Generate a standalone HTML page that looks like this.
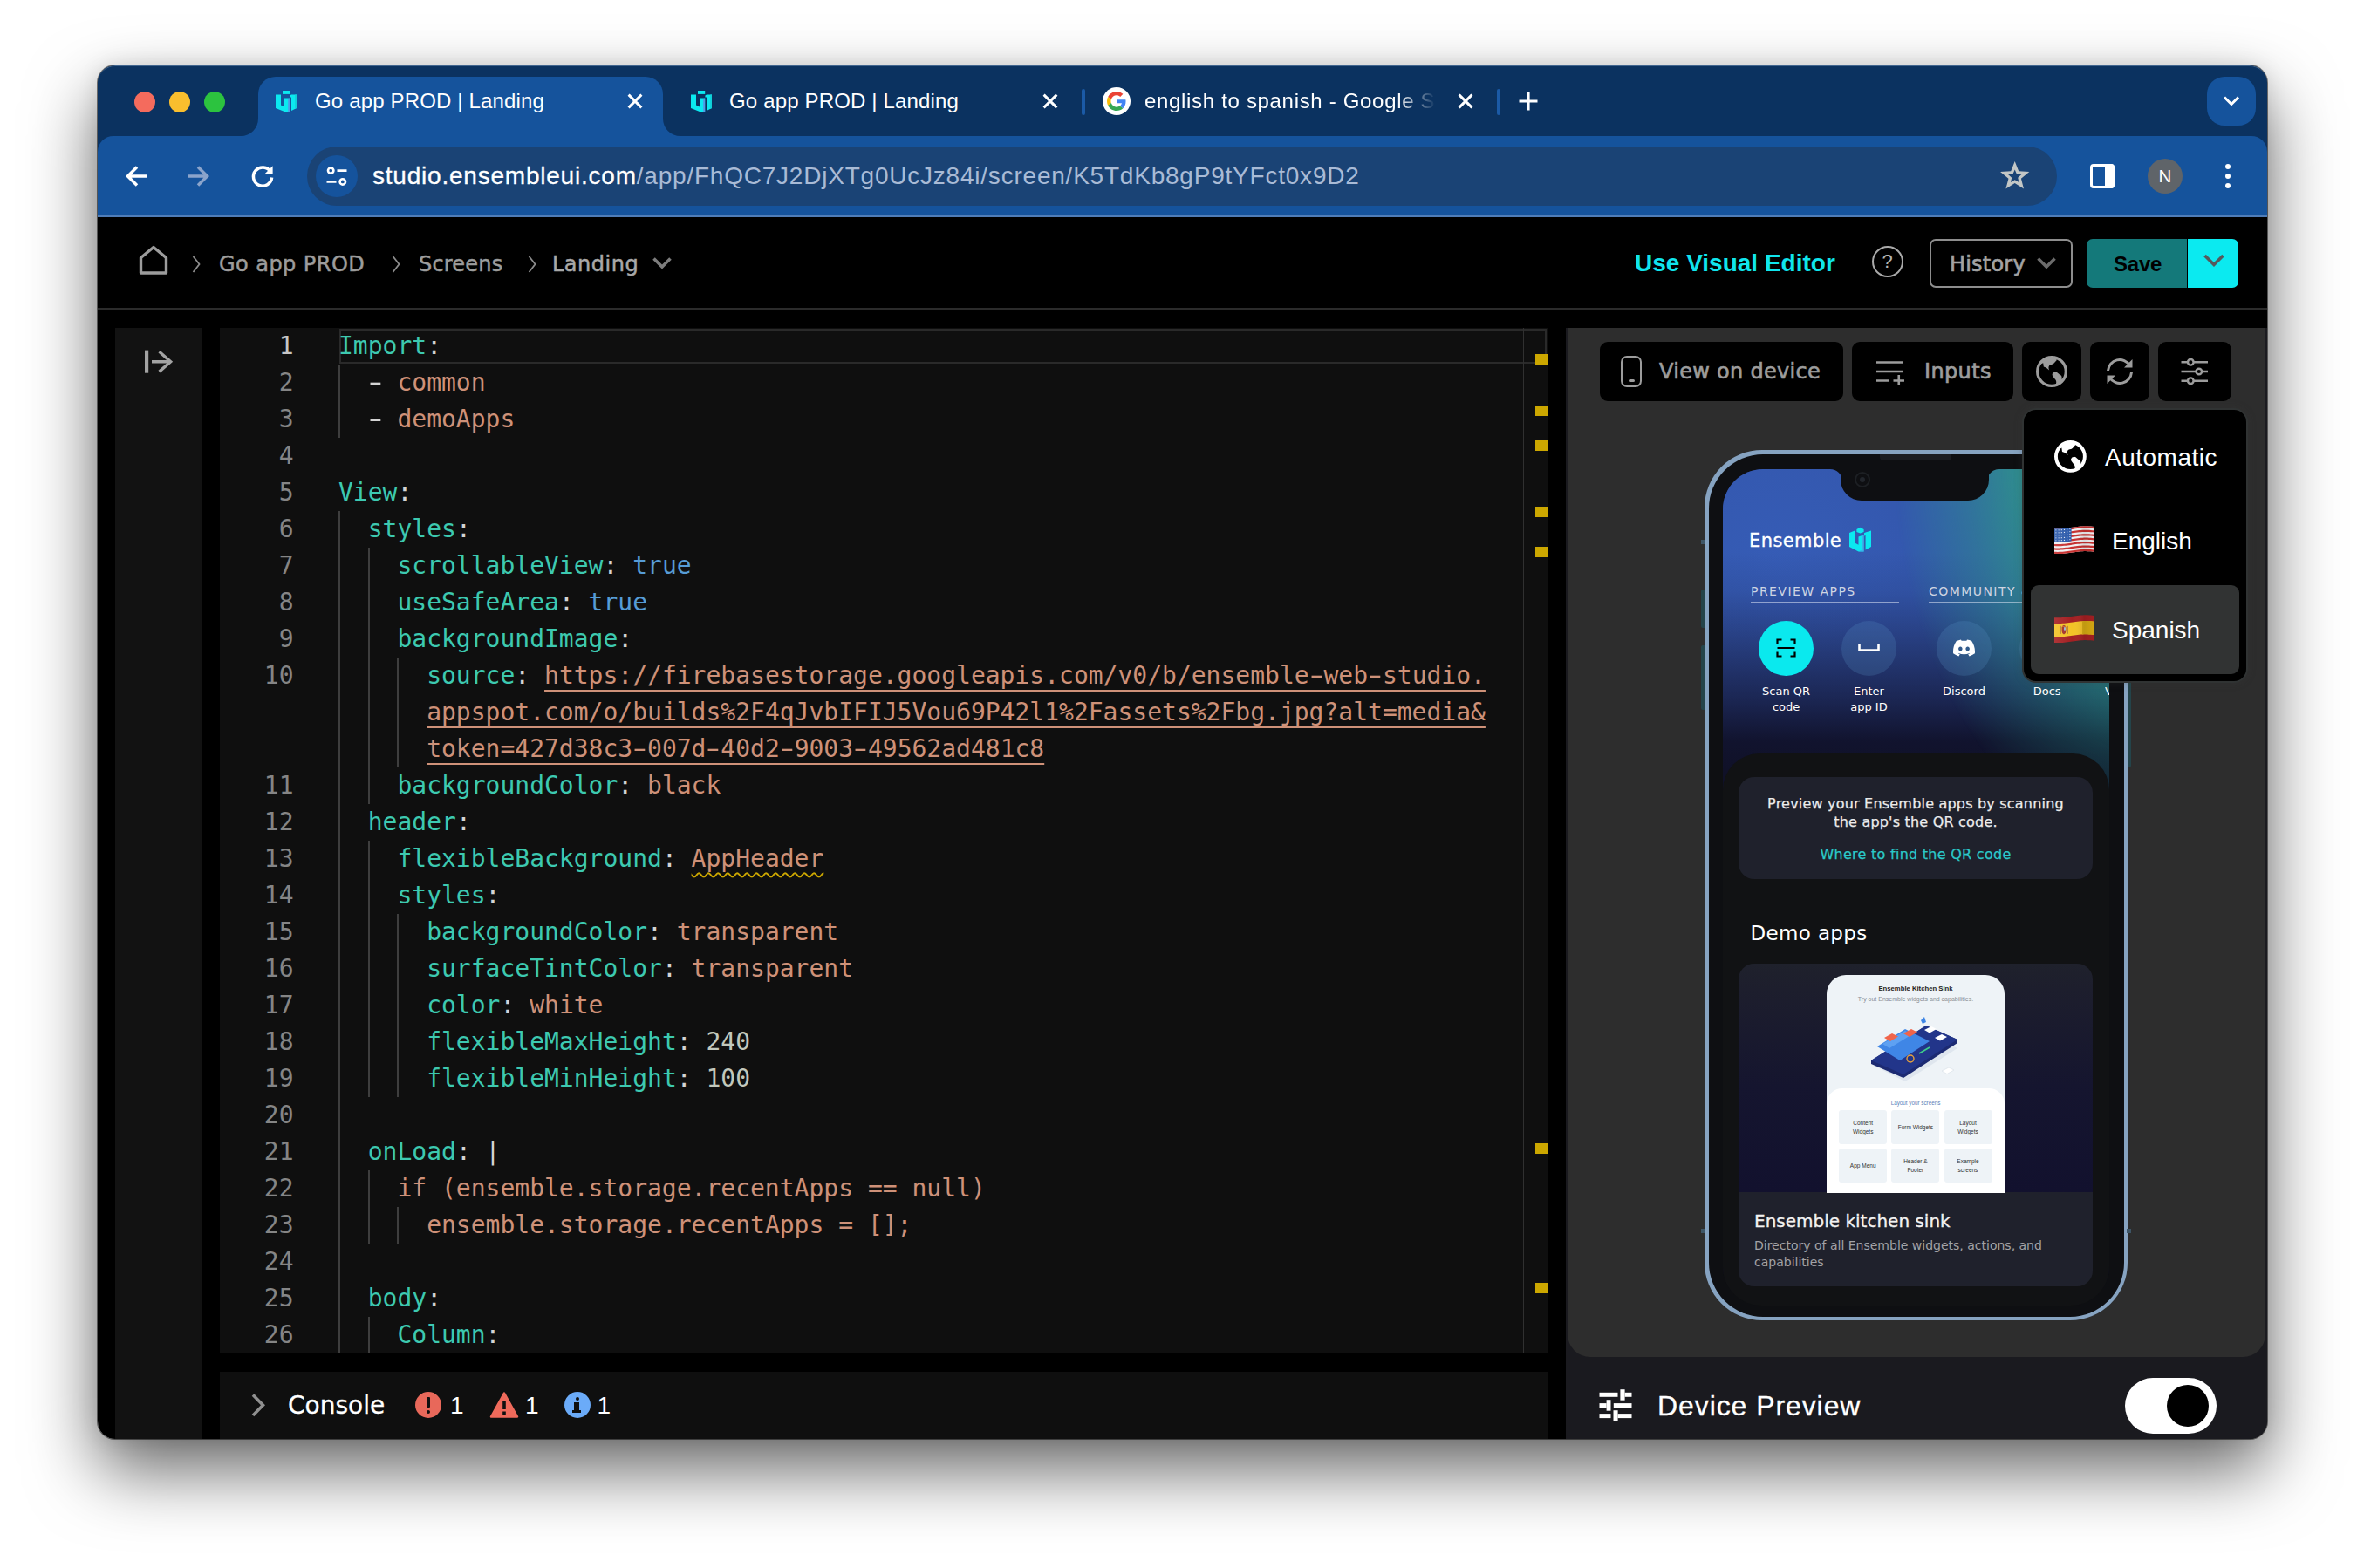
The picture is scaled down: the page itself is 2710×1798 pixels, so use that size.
<!DOCTYPE html>
<html lang="en">
<head>
<meta charset="utf-8">
<title>Go app PROD | Landing</title>
<style>
html,body{margin:0;padding:0;background:#fff;}
body{width:2710px;height:1798px;position:relative;overflow:hidden;font-family:"Liberation Sans",sans-serif;}
.abs,.abs *{box-sizing:border-box;}
.a{position:absolute;}
#shadow{position:absolute;left:112px;top:75px;width:2487px;height:1575px;border-radius:20px;
  box-shadow:0 0 0 1px rgba(0,0,0,.5),0 36px 80px rgba(0,0,0,.60),0 0 24px rgba(0,0,0,.10);}
#win{position:absolute;left:112px;top:75px;width:2487px;height:1575px;border-radius:20px;overflow:hidden;background:#000;}
#pg{position:absolute;left:-112px;top:-75px;width:2710px;height:1798px;}
#pg div,#pg span,#pg svg{position:absolute;box-sizing:border-box;}
.t{white-space:pre;line-height:1;}
/* chrome */
#tabstrip{left:112px;top:75px;width:2487px;height:120px;background:#0b3260;}
#toolbar{left:112px;top:156px;width:2487px;height:93px;background:#15539c;border-radius:18px 18px 0 0;}
#tbline{left:112px;top:247px;width:2487px;height:2px;background:#4f7db8;}
.tl{width:24px;height:24px;border-radius:50%;top:105px;}
#tab1{left:296px;top:88px;width:464px;height:70px;background:#15539c;border-radius:20px 20px 0 0;}
.tabtxt{font-size:24px;color:#fff;top:104px;letter-spacing:.16px;}
.sep{width:4px;height:30px;top:102px;background:#1b5aa6;border-radius:2px;}
#omni{left:352px;top:168px;width:2006px;height:68px;border-radius:34px;background:#1a4375;}
#url{left:427px;top:188px;font-size:28px;letter-spacing:.78px;color:#a9bbd6;}
#url b{font-weight:400;color:#fff;-webkit-text-stroke:.3px #fff;}
/* app header */
#hdr{left:112px;top:249px;width:2487px;height:106px;background:#000;border-bottom:2px solid #2b2b2b;}
.mont{font-family:"DejaVu Sans","Liberation Sans",sans-serif;}
.crumb{font-size:24px;color:#9c9c9c;top:290.5px;-webkit-text-stroke:.5px #9c9c9c;}

/* main */
#side{left:132px;top:376px;width:100px;height:1280px;background:#121212;}
#ed{left:252px;top:376px;width:1522px;height:1176px;background:#0f0f0f;overflow:hidden;}
#con{left:252px;top:1573px;width:1522px;height:80px;background:#0f0f0f;}
.mono{font-family:"DejaVu Sans Mono","Liberation Mono",monospace;font-size:28px;}
#pg .ln{left:0;width:1522px;height:42px;}
#pg .ln .n{right:1437.5px;top:0;line-height:42px;color:#858585;white-space:pre;}
#pg .ln .c{left:136px;top:0;line-height:42px;color:#d4d4d4;white-space:pre;}
#pg .ln i{position:absolute;top:0;width:2px;height:42px;background:#3e3e3e;}
.k{color:#3dc9b0;} .s{color:#ce9178;} .b{color:#569cd6;} .m{color:#c2c8bc;}
#pg .c span{position:static;}
.u{text-decoration:underline;text-decoration-thickness:2px;text-underline-offset:7px;}
#pg .ym{left:1508px;width:14px;height:12px;background:#cca700;}
#prev{left:1797px;top:376px;width:799.5px;height:1180px;background:#2d2d2d;border-radius:0 0 26px 26px;}
#dbar{left:1795px;top:376px;width:810px;height:1284px;background:#1a1a1f;}
.pbtn{top:392px;height:68px;background:#000;border-radius:9px;}

.ph{font-family:"DejaVu Sans","Liberation Sans",sans-serif;white-space:pre;line-height:1;}
#screen{left:1975px;top:538px;width:443px;height:958px;border-radius:46px 46px 44px 44px;overflow:hidden;background:#101128;}
#hero{left:0;top:0;width:443px;height:380px;background:
  linear-gradient(180deg, rgba(17,18,46,0) 0, rgba(17,18,46,0) 95px, rgba(17,18,48,.1) 140px, rgba(17,18,48,.3) 182px, rgba(17,18,46,.7) 262px, rgba(16,17,42,.97) 312px, #101128 345px),
  radial-gradient(ellipse 250px 230px at 14% 28%, rgba(54,93,184,.8) 0%, rgba(52,88,176,.4) 60%, rgba(40,70,160,0) 100%),
  #3458ae;}
#teal{left:0;top:0;width:443px;height:380px;background:linear-gradient(180deg,#2f8f8c 0,#2e8c8a 150px,#297f7c 230px,#21706c 285px,#1c5f5e 330px,#1a5858 380px);
  -webkit-mask-image:radial-gradient(ellipse 262px 380px at 520px -20px, #000 0%, #000 66%, rgba(0,0,0,.5) 92%, transparent 124%);
  mask-image:radial-gradient(ellipse 262px 380px at 520px -20px, #000 0%, #000 66%, rgba(0,0,0,.5) 92%, transparent 124%);}
.circ{width:63px;height:63px;border-radius:50%;top:711.5px;}
.lbl{font-size:13px;color:#fff;text-align:center;width:90px;}
#pg .c .hy{display:inline-block;transform:scaleX(1.65);text-decoration:inherit;text-decoration-thickness:2px;text-underline-offset:7px;}
</style>
</head>
<body>
<div id="shadow"></div>
<div id="win"><div id="pg">

<!-- ===== TAB STRIP ===== -->
<div id="tabstrip"></div>
<div style="left:112px;top:75px;width:2487px;height:40px;border-radius:20px 20px 0 0;border-top:1.5px solid rgba(150,180,215,.4)"></div>
<div class="tl" style="left:154px;background:#f46b5d"></div>
<div class="tl" style="left:194px;background:#f9be2e"></div>
<div class="tl" style="left:234px;background:#2cc33f"></div>
<div id="toolbar"></div>
<div id="tab1"></div>
<svg style="left:276px;top:136px" width="20" height="20"><path d="M20 0 V20 H0 A20 20 0 0 0 20 0Z" fill="#15539c"/></svg>
<svg style="left:760px;top:136px" width="20" height="20"><path d="M0 0 V20 H20 A20 20 0 0 1 0 0Z" fill="#15539c"/></svg>

<svg style="left:315px;top:103px" width="26" height="26" viewBox="0 0 26 26">
<path d="M1 5.6 L7 5.6 L7 17.5 L11 19.5 L11 9.4 L17.2 9.4 L17.2 25 L11 25 L1 21Z" fill="#0be9f0"/>
<path d="M15.2 10.5 L17.2 9.4 L17.2 25 L15.2 25Z" fill="#4f9be8"/>
<rect x="9" y="1" width="8.2" height="3.9" fill="#0be9f0"/>
<path d="M19 5.6 L25 5.6 L25 21 L19 24 L19 8.6 L17.4 8.6 L17.4 6.4Z" fill="#0be9f0"/>
<path d="M23.2 5.6 L25 5.6 L25 21 L23.2 22Z" fill="#10cfd8"/>
</svg>
<span class="t tabtxt" style="left:361px">Go app PROD | Landing</span>
<svg style="left:718px;top:106px" width="20" height="20" viewBox="0 0 20 20"><path d="M2.6 2.6 L17.4 17.4 M17.4 2.6 L2.6 17.4" stroke="#fff" stroke-width="3" fill="none"/></svg>
<svg style="left:791px;top:103px" width="26" height="26" viewBox="0 0 26 26">
<path d="M1 5.6 L7 5.6 L7 17.5 L11 19.5 L11 9.4 L17.2 9.4 L17.2 25 L11 25 L1 21Z" fill="#0be9f0"/>
<path d="M15.2 10.5 L17.2 9.4 L17.2 25 L15.2 25Z" fill="#4f9be8"/>
<rect x="9" y="1" width="8.2" height="3.9" fill="#0be9f0"/>
<path d="M19 5.6 L25 5.6 L25 21 L19 24 L19 8.6 L17.4 8.6 L17.4 6.4Z" fill="#0be9f0"/>
<path d="M23.2 5.6 L25 5.6 L25 21 L23.2 22Z" fill="#10cfd8"/>
</svg>
<span class="t tabtxt" style="left:836px">Go app PROD | Landing</span>
<svg style="left:1194px;top:106px" width="20" height="20" viewBox="0 0 20 20"><path d="M2.6 2.6 L17.4 17.4 M17.4 2.6 L2.6 17.4" stroke="#fff" stroke-width="3" fill="none"/></svg>
<div class="sep" style="left:1240px"></div>
<div style="left:1264px;top:100px;width:32px;height:32px;border-radius:50%;background:#fff"></div>
<svg style="left:1269px;top:105px" width="22" height="22" viewBox="0 0 48 48">
<path fill="#EA4335" d="M24 9.5c3.54 0 6.71 1.22 9.21 3.6l6.85-6.85C35.9 2.38 30.47 0 24 0 14.62 0 6.51 5.38 2.56 13.22l7.98 6.19C12.43 13.72 17.74 9.5 24 9.5z"/>
<path fill="#4285F4" d="M46.98 24.55c0-1.57-.15-3.09-.38-4.55H24v9.02h12.94c-.58 2.96-2.26 5.48-4.78 7.18l7.73 6c4.51-4.18 7.09-10.36 7.09-17.65z"/>
<path fill="#FBBC05" d="M10.53 28.59c-.48-1.45-.76-2.99-.76-4.59s.27-3.14.76-4.59l-7.98-6.19C.92 16.46 0 20.12 0 24c0 3.88.92 7.54 2.56 10.78l7.97-6.19z"/>
<path fill="#34A853" d="M24 48c6.48 0 11.93-2.13 15.89-5.81l-7.73-6c-2.15 1.45-4.92 2.3-8.16 2.3-6.26 0-11.57-4.22-13.47-9.91l-7.98 6.19C6.51 42.62 14.62 48 24 48z"/>
</svg>
<span class="t tabtxt" style="left:1312px;letter-spacing:.68px;width:336px;overflow:hidden;height:32px;-webkit-mask-image:linear-gradient(90deg,#000 0,#000 290px,transparent 334px);mask-image:linear-gradient(90deg,#000 0,#000 290px,transparent 334px)">english to spanish - Google Search</span>
<svg style="left:1670px;top:106px" width="20" height="20" viewBox="0 0 20 20"><path d="M2.6 2.6 L17.4 17.4 M17.4 2.6 L2.6 17.4" stroke="#fff" stroke-width="3" fill="none"/></svg>
<div class="sep" style="left:1716px"></div>
<svg style="left:1740px;top:104px" width="24" height="24" viewBox="0 0 24 24"><path d="M12 1.5 V22.5 M1.5 12 H22.5" stroke="#fff" stroke-width="3.2" fill="none"/></svg>
<div style="left:2530px;top:88px;width:56px;height:56px;border-radius:20px;background:#15539c"></div>
<svg style="left:2546px;top:106px" width="24" height="20" viewBox="0 0 24 20"><path d="M4 5.5 L12 13.5 L20 5.5" stroke="#fff" stroke-width="3" fill="none"/></svg>


<svg style="left:142px;top:188px" width="30" height="28" viewBox="0 0 30 28"><path d="M27 14 H5 M15 3.5 L4.5 14 L15 24.5" stroke="#fff" stroke-width="3.5" fill="none"/></svg>
<svg style="left:212px;top:188px" width="30" height="28" viewBox="0 0 30 28"><path d="M3 14 H25 M15 3.5 L25.5 14 L15 24.5" stroke="#8ba4cb" stroke-width="3.5" fill="none"/></svg>
<svg style="left:286px;top:187px" width="30" height="30" viewBox="0 0 30 30"><path d="M24.2 10.2 A10.6 10.6 0 1 0 25.6 16.5" stroke="#fff" stroke-width="3.5" fill="none"/><path d="M26.6 3.2 V12.2 H17.6Z" fill="#fff"/></svg>
<div id="omni"></div>
<div style="left:362px;top:178px;width:48px;height:48px;border-radius:50%;background:#15539c"></div>
<svg style="left:373px;top:189px" width="26" height="26" viewBox="0 0 26 26"><g stroke="#fff" stroke-width="2.6" fill="none"><circle cx="6.2" cy="6.6" r="3.2"/><path d="M13.5 6.6 H24.5"/><circle cx="19.8" cy="19.4" r="3.2"/><path d="M1.5 19.4 H12.5"/></g></svg>
<span id="url" class="t"><b>studio.ensembleui.com</b>/app/FhQC7J2DjXTg0UcJz84i/screen/K5TdKb8gP9tYFct0x9D2</span>
<svg style="left:2292px;top:184px" width="36" height="36" viewBox="0 0 36 36"><path d="M17.70 0.90 L22.17 12.25 L34.34 12.99 L24.93 20.75 L27.99 32.56 L17.70 26.00 L7.41 32.56 L10.47 20.75 L1.06 12.99 L13.23 12.25Z M17.70 10.50 L19.87 15.51 L25.31 16.03 L21.22 19.64 L22.40 24.97 L17.70 22.20 L13.00 24.97 L14.18 19.64 L10.09 16.03 L15.53 15.51Z" fill="#c3c7c6" fill-rule="evenodd"/></svg>
<div style="left:2396px;top:187.5px;width:28px;height:28.6px;border:3px solid #fff;border-radius:4px"></div>
<div style="left:2413px;top:187.5px;width:11px;height:28.6px;background:#fff;border-radius:0 4px 4px 0"></div>
<div style="left:2462px;top:182px;width:40px;height:40px;border-radius:50%;background:#5f6469"></div>
<span class="t" style="left:2474.6px;top:192.2px;font-size:20.5px;color:#fff">N</span>
<div style="left:2550.8px;top:187.5px;width:6.4px;height:6.4px;border-radius:50%;background:#fff"></div>
<div style="left:2550.8px;top:198.9px;width:6.4px;height:6.4px;border-radius:50%;background:#fff"></div>
<div style="left:2550.8px;top:209.9px;width:6.4px;height:6.4px;border-radius:50%;background:#fff"></div>

<div id="tbline"></div>

<!-- ===== APP HEADER ===== -->
<div id="hdr"></div>

<svg style="left:156px;top:278px" width="40" height="40" viewBox="0 0 40 40"><path d="M5.5 17.5 L20 5.5 L34.5 17.5 V35 H5.5Z" stroke="#9c9c9c" stroke-width="3.4" fill="none" stroke-linejoin="round"/></svg>
<svg class="chev" style="left:218px;top:291px" width="14" height="24" viewBox="0 0 14 24"><path d="M3.5 3 L10.5 12 L3.5 21" stroke="#8c8c8c" stroke-width="1.8" fill="none"/></svg>
<span class="t mont crumb" style="left:251px;letter-spacing:.45px">Go app PROD</span>
<svg class="chev" style="left:447px;top:291px" width="14" height="24" viewBox="0 0 14 24"><path d="M3.5 3 L10.5 12 L3.5 21" stroke="#8c8c8c" stroke-width="1.8" fill="none"/></svg>
<span class="t mont crumb" style="left:480px;letter-spacing:.2px">Screens</span>
<svg class="chev" style="left:603px;top:291px" width="14" height="24" viewBox="0 0 14 24"><path d="M3.5 3 L10.5 12 L3.5 21" stroke="#8c8c8c" stroke-width="1.8" fill="none"/></svg>
<span class="t mont crumb" style="left:633px;letter-spacing:.5px;color:#a8a8a8;-webkit-text-stroke-color:#a8a8a8">Landing</span>
<svg style="left:746px;top:292px" width="26" height="20" viewBox="0 0 26 20"><path d="M3.5 4.5 L13 14 L22.5 4.5" stroke="#7d7d7d" stroke-width="3.6" fill="none"/></svg>

<span class="t" style="left:1874px;top:288px;font-size:28px;font-weight:700;color:#10e5ed">Use Visual Editor</span>
<div style="left:2145.5px;top:281.8px;width:36.5px;height:36.5px;border-radius:50%;border:2.4px solid #a9a9a9"></div>
<span class="t" style="left:2157.5px;top:289px;font-size:22px;color:#b5b5b5;font-weight:400">?</span>
<div style="left:2212px;top:274px;width:164px;height:56px;border:2px solid #8d8d8d;border-radius:7px"></div>
<span class="t mont" style="left:2235px;top:291px;font-size:24px;color:#a3a3a3;-webkit-text-stroke:.6px #a3a3a3;letter-spacing:.2px">History</span>
<svg style="left:2333px;top:292px" width="26" height="20" viewBox="0 0 26 20"><path d="M3.5 4.5 L13 14 L22.5 4.5" stroke="#6b6b6b" stroke-width="3.6" fill="none"/></svg>
<div style="left:2392px;top:274px;width:115px;height:56px;background:#14797a;border-radius:7px 0 0 7px"></div>
<span class="t" style="left:2423px;top:290.5px;font-size:24px;font-weight:700;color:#000;letter-spacing:-.2px">Save</span>
<div style="left:2508px;top:274px;width:58px;height:56px;background:#0beaf0;border-radius:0 7px 7px 0"></div>
<svg style="left:2524px;top:289px" width="28" height="20" viewBox="0 0 28 20"><path d="M3.5 4 L14 14.5 L24.5 4" stroke="#56595c" stroke-width="3.6" fill="none"/></svg>


<!-- ===== MAIN ===== -->
<div id="side"></div>
<svg style="left:164px;top:397px" width="36" height="34" viewBox="0 0 36 34"><path d="M4.1 4.6 V30.7" stroke="#a3a3a3" stroke-width="4.2" fill="none"/><path d="M10 17.7 H30 M18.6 6.3 L31.6 17.7 L18.6 29.1" stroke="#a3a3a3" stroke-width="3.4" fill="none"/></svg>
<div id="ed" class="mono">
<div style="left:137px;top:1px;width:1384px;height:40px;border:2px solid #2a2a2a"></div>
<div class="ln" style="top:-0.5px"><span class="n" style="color:#c6c6c6">1</span><span class="c"><span class="k">Import</span>:</span></div>
<div class="ln" style="top:41.5px"><i style="left:136.0px"></i><span class="n">2</span><span class="c">  <span class="hy">-</span> <span class="s">common</span></span></div>
<div class="ln" style="top:83.5px"><i style="left:136.0px"></i><span class="n">3</span><span class="c">  <span class="hy">-</span> <span class="s">demoApps</span></span></div>
<div class="ln" style="top:125.5px"><span class="n">4</span><span class="c"></span></div>
<div class="ln" style="top:167.5px"><span class="n">5</span><span class="c"><span class="k">View</span>:</span></div>
<div class="ln" style="top:209.5px"><i style="left:136.0px"></i><span class="n">6</span><span class="c">  <span class="k">styles</span>:</span></div>
<div class="ln" style="top:251.5px"><i style="left:136.0px"></i><i style="left:169.7px"></i><span class="n">7</span><span class="c">    <span class="k">scrollableView</span>: <span class="b">true</span></span></div>
<div class="ln" style="top:293.5px"><i style="left:136.0px"></i><i style="left:169.7px"></i><span class="n">8</span><span class="c">    <span class="k">useSafeArea</span>: <span class="b">true</span></span></div>
<div class="ln" style="top:335.5px"><i style="left:136.0px"></i><i style="left:169.7px"></i><span class="n">9</span><span class="c">    <span class="k">backgroundImage</span>:</span></div>
<div class="ln" style="top:377.5px"><i style="left:136.0px"></i><i style="left:169.7px"></i><i style="left:203.4px"></i><span class="n">10</span><span class="c">      <span class="k">source</span>: <span class="s u">https://firebasestorage.googleapis.com/v0/b/ensemble<span class="hy">-</span>web<span class="hy">-</span>studio.</span></span></div>
<div class="ln" style="top:419.5px"><i style="left:136.0px"></i><i style="left:169.7px"></i><i style="left:203.4px"></i><span class="c">      <span class="s u">appspot.com/o/builds%2F4qJvbIFIJ5Vou69P42l1%2Fassets%2Fbg.jpg?alt=media&amp;</span></span></div>
<div class="ln" style="top:461.5px"><i style="left:136.0px"></i><i style="left:169.7px"></i><i style="left:203.4px"></i><span class="c">      <span class="s u">token=427d38c3<span class="hy">-</span>007d<span class="hy">-</span>40d2<span class="hy">-</span>9003<span class="hy">-</span>49562ad481c8</span></span></div>
<div class="ln" style="top:503.5px"><i style="left:136.0px"></i><i style="left:169.7px"></i><span class="n">11</span><span class="c">    <span class="k">backgroundColor</span>: <span class="s">black</span></span></div>
<div class="ln" style="top:545.5px"><i style="left:136.0px"></i><span class="n">12</span><span class="c">  <span class="k">header</span>:</span></div>
<div class="ln" style="top:587.5px"><i style="left:136.0px"></i><i style="left:169.7px"></i><span class="n">13</span><span class="c">    <span class="k">flexibleBackground</span>: <span class="s" style="text-decoration:underline wavy #cca700;text-decoration-thickness:1.6px;text-underline-offset:6px">AppHeader</span></span></div>
<div class="ln" style="top:629.5px"><i style="left:136.0px"></i><i style="left:169.7px"></i><span class="n">14</span><span class="c">    <span class="k">styles</span>:</span></div>
<div class="ln" style="top:671.5px"><i style="left:136.0px"></i><i style="left:169.7px"></i><i style="left:203.4px"></i><span class="n">15</span><span class="c">      <span class="k">backgroundColor</span>: <span class="s">transparent</span></span></div>
<div class="ln" style="top:713.5px"><i style="left:136.0px"></i><i style="left:169.7px"></i><i style="left:203.4px"></i><span class="n">16</span><span class="c">      <span class="k">surfaceTintColor</span>: <span class="s">transparent</span></span></div>
<div class="ln" style="top:755.5px"><i style="left:136.0px"></i><i style="left:169.7px"></i><i style="left:203.4px"></i><span class="n">17</span><span class="c">      <span class="k">color</span>: <span class="s">white</span></span></div>
<div class="ln" style="top:797.5px"><i style="left:136.0px"></i><i style="left:169.7px"></i><i style="left:203.4px"></i><span class="n">18</span><span class="c">      <span class="k">flexibleMaxHeight</span>: <span class="m">240</span></span></div>
<div class="ln" style="top:839.5px"><i style="left:136.0px"></i><i style="left:169.7px"></i><i style="left:203.4px"></i><span class="n">19</span><span class="c">      <span class="k">flexibleMinHeight</span>: <span class="m">100</span></span></div>
<div class="ln" style="top:881.5px"><i style="left:136.0px"></i><span class="n">20</span><span class="c"></span></div>
<div class="ln" style="top:923.5px"><i style="left:136.0px"></i><span class="n">21</span><span class="c">  <span class="k">onLoad</span>: |</span></div>
<div class="ln" style="top:965.5px"><i style="left:136.0px"></i><i style="left:169.7px"></i><span class="n">22</span><span class="c">    <span class="s">if (ensemble.storage.recentApps == null)</span></span></div>
<div class="ln" style="top:1007.5px"><i style="left:136.0px"></i><i style="left:169.7px"></i><i style="left:203.4px"></i><span class="n">23</span><span class="c">      <span class="s">ensemble.storage.recentApps = [];</span></span></div>
<div class="ln" style="top:1049.5px"><i style="left:136.0px"></i><span class="n">24</span><span class="c"></span></div>
<div class="ln" style="top:1091.5px"><i style="left:136.0px"></i><span class="n">25</span><span class="c">  <span class="k">body</span>:</span></div>
<div class="ln" style="top:1133.5px"><i style="left:136.0px"></i><i style="left:169.7px"></i><span class="n">26</span><span class="c">    <span class="k">Column</span>:</span></div>
<div style="left:1494px;top:0;width:1px;height:1176px;background:#303030"></div>
<div class="ym" style="top:30px"></div>
<div class="ym" style="top:89px"></div>
<div class="ym" style="top:129px"></div>
<div class="ym" style="top:205px"></div>
<div class="ym" style="top:251px"></div>
<div class="ym" style="top:935px"></div>
<div class="ym" style="top:1095px"></div>
</div>
<div id="con"></div>
<svg style="left:284px;top:1594px" width="24" height="34" viewBox="0 0 24 34"><path d="M6 5.5 L17.5 17.2 L6 29" stroke="#8f8f8f" stroke-width="3.6" fill="none"/></svg>
<span class="t mont" style="left:330px;top:1598px;font-size:28px;color:#fff;-webkit-text-stroke:.3px #fff">Console</span>
<div style="left:476px;top:1596px;width:30px;height:30px;border-radius:50%;background:#e8685a"></div>
<div style="left:489px;top:1602px;width:4px;height:12px;background:#0f0f0f;border-radius:1px"></div><div style="left:489px;top:1617px;width:4px;height:4px;background:#0f0f0f;border-radius:50%"></div>
<span class="t" style="left:516px;top:1597.5px;font-size:28px;color:#fff">1</span>
<svg style="left:561px;top:1595px" width="34" height="32" viewBox="0 0 34 32"><path d="M17 2.5 L32 29.5 H2Z" fill="#ef6a5b" stroke="#ef6a5b" stroke-width="2.5" stroke-linejoin="round"/><rect x="15.2" y="11" width="3.6" height="10" fill="#0f0f0f"/><rect x="15.2" y="23.5" width="3.6" height="3.6" fill="#0f0f0f"/></svg>
<span class="t" style="left:602px;top:1597.5px;font-size:28px;color:#fff">1</span>
<div style="left:647px;top:1596px;width:30px;height:30px;border-radius:50%;background:#6babf8"></div>
<div style="left:660px;top:1602px;width:4px;height:4px;background:#0f0f0f;border-radius:50%"></div><div style="left:658px;top:1608px;width:6px;height:11px;background:#0f0f0f;"></div><div style="left:656px;top:1617px;width:10px;height:3px;background:#0f0f0f;"></div>
<span class="t" style="left:684.5px;top:1597.5px;font-size:28px;color:#fff">1</span>
<div id="dbar"></div>
<div id="prev"></div>
<div class="pbtn" style="left:1834px;width:279px"></div>
<div style="left:1858px;top:408px;width:24px;height:36px;border:2.8px solid #9c9c9c;border-radius:7px"></div><div style="left:1866.5px;top:435px;width:7px;height:3px;background:#9c9c9c;border-radius:1.5px"></div>
<span class="t mont" style="left:1902px;top:414px;font-size:24px;color:#9c9c9c;-webkit-text-stroke:.65px #9c9c9c;letter-spacing:.3px">View on device</span>
<div class="pbtn" style="left:2123px;width:185px"></div>
<svg style="left:2150px;top:412px" width="34" height="30" viewBox="0 0 34 30"><path d="M1 3.5 H31 M1 14 H31 M1 24.5 H15.5 M20.5 24.5 H33 M26.75 18 V30" stroke="#9c9c9c" stroke-width="2.6" fill="none"/></svg>
<span class="t mont" style="left:2206px;top:414px;font-size:24px;color:#9c9c9c;-webkit-text-stroke:.65px #9c9c9c;letter-spacing:.35px">Inputs</span>
<div class="pbtn" style="left:2318px;width:68px"></div>
<svg style="left:2333.6px;top:407.9px" width="36" height="36" viewBox="0 0 36 36"><defs><clipPath id="gc2333"><circle cx="18" cy="18" r="16.35"/></clipPath></defs><circle cx="18" cy="18" r="16.35" stroke="#9c9c9c" stroke-width="3.3" fill="none"/>
<g clip-path="url(#gc2333)" fill="#9c9c9c"><path d="M2 11 L8.2 8.2 L8.8 12.6 Q12 13.4 13.4 15 L15.2 16.6 Q14 13.5 14.7 12.2 Q15 10.3 17 10 Q19.5 10.2 20.6 8.6 L23.8 5 L22 -2 L0 -2Z"/>
<path d="M18.7 20.8 Q19.3 18.6 22.3 18.4 Q24.2 18.6 25.3 20 Q27 21.6 28.8 22.5 Q30 24 29.6 27 L36 27 L30 38 L23 32 Q23.6 29.6 22.6 27.8 Q20.6 25 19.3 23.4 Q18.4 22.2 18.7 20.8Z"/></g></svg>
<div class="pbtn" style="left:2396px;width:68px"></div>
<svg style="left:2412px;top:408px" width="36" height="36" viewBox="0 0 36 36"><g stroke="#9c9c9c" stroke-width="3" fill="none"><path d="M4.5 17 A13.5 13.5 0 0 1 29.5 11"/><path d="M31.5 19 A13.5 13.5 0 0 1 6.5 25"/></g><path d="M32.5 4 V13.5 H23Z" fill="#9c9c9c"/><path d="M3.5 32 V22.5 H13Z" fill="#9c9c9c"/></svg>
<div class="pbtn" style="left:2474px;width:84px"></div>
<svg style="left:2499px;top:409px" width="34" height="34" viewBox="0 0 34 34"><g stroke="#9c9c9c" stroke-width="2.4" fill="#000"><path d="M1.5 6.3 H32 M1.5 17 H32 M1.5 27.7 H32"/><circle cx="12.3" cy="6.3" r="3.3"/><circle cx="21.8" cy="17" r="3.3"/><circle cx="12.3" cy="27.7" r="3.3"/></g></svg>
<div style="left:1954px;top:516px;width:485px;height:998px;border-radius:66px;background:#86a3c1"></div>
<div style="left:1958.5px;top:520.5px;width:476px;height:989px;border-radius:62px;background:#0e0f12"></div>
<div style="left:1950px;top:619px;width:5px;height:5px;background:#3d5566"></div>
<div style="left:1950px;top:1409px;width:5px;height:5px;background:#3d5566"></div><div style="left:2438px;top:1409px;width:5px;height:5px;background:#3d5566"></div>
<div style="left:1950px;top:676px;width:4px;height:44px;background:#24444a;border-radius:2px 0 0 2px"></div>
<div style="left:1950px;top:740px;width:4px;height:74px;background:#24444a;border-radius:2px 0 0 2px"></div>
<div style="left:2439px;top:770px;width:4px;height:110px;background:#24444a;border-radius:0 2px 2px 0"></div>
<div id="screen"><div id="hero"></div><div id="teal"></div></div>
<div style="left:2110px;top:530px;width:170px;height:44px;border-radius:0 0 24px 24px;background:#0e0f12"></div>
<svg style="left:2098px;top:538px" width="14" height="14"><path d="M0 0 H14 V14 A14 14 0 0 0 0 0Z" fill="#0e0f12"/></svg>
<svg style="left:2278px;top:538px" width="14" height="14"><path d="M14 0 H0 V14 A14 14 0 0 1 14 0Z" fill="#0e0f12"/></svg>
<div style="left:2155px;top:521px;width:82px;height:7px;border-radius:0 0 4px 4px;background:#1b1d22"></div>
<div style="left:2126px;top:541px;width:18px;height:18px;border-radius:50%;border:2.5px solid #1d2024;background:#0e0f12"></div><div style="left:2132px;top:547px;width:6px;height:6px;border-radius:50%;background:#22262c"></div>
<span class="ph" style="left:2005px;top:609.5px;font-size:21px;color:#fff;letter-spacing:.4px;-webkit-text-stroke:.3px #fff">Ensemble</span>
<svg style="left:2119px;top:604px" width="27" height="30" viewBox="0 0 27 30">
<path d="M1 7 L7.2 4.6 L7.2 18.5 L11.5 20.8 L11.5 11.5 L17.6 9.3 L17.6 28.6 L11.5 28.6 L1 23Z" fill="#0be9f0"/>
<path d="M11.5 28.6 L17.6 28.6 L17.6 9.3 L15.6 10 L15.6 26.4Z" fill="#4f9be8" opacity=".7"/>
<path d="M9.4 3 L13.5 .8 L17.6 3 L17.6 6 L13.5 7.6 L9.4 6Z" fill="#0be9f0"/>
<path d="M19.6 6.5 L26 4.6 L26 23 L19.6 26.6 L19.6 10 L18 10.4 L18 7.2Z" fill="#0be9f0"/>
</svg>
<span class="ph" style="left:2007px;top:671px;font-size:14px;color:#cfd5e2;letter-spacing:1.45px">PREVIEW APPS</span>
<div style="left:2007px;top:690px;width:170px;height:1.6px;background:rgba(225,232,245,.55)"></div>
<span class="ph" style="left:2211px;top:671px;font-size:14px;color:#cfd5e2;letter-spacing:1.45px">COMMUNITY &amp; RESOURCES</span>
<div style="left:2211px;top:690px;width:207px;height:1.6px;background:rgba(225,232,245,.55)"></div>
<div class="circ" style="left:2016px;background:#0ae9ee"></div>
<svg style="left:2036px;top:732px" width="23" height="22" viewBox="0 0 23 22"><path d="M1.5 6.5 V1.5 H6.5 M16.5 1.5 H21.5 V6.5 M1.5 15.5 V20.5 H6.5 M16.5 20.5 H21.5 V15.5 M1.5 11 H21.5" stroke="#000" stroke-width="2.2" fill="none"/></svg>
<div class="circ" style="left:2111px;background:rgba(90,150,200,.22)"></div>
<svg style="left:2130px;top:738px" width="25" height="10" viewBox="0 0 25 10"><path d="M1.5 1 V7.5 H23.5 V1" stroke="#fff" stroke-width="2.6" fill="none"/></svg>
<div class="circ" style="left:2220px;background:rgba(90,150,200,.22)"></div>
<svg style="left:2239px;top:733px" width="25" height="20" viewBox="0 0 127.14 96.36"><path fill="#fff" d="M107.7,8.07A105.15,105.15,0,0,0,81.47,0a72.06,72.06,0,0,0-3.36,6.83A97.68,97.68,0,0,0,49,6.83,72.37,72.37,0,0,0,45.64,0,105.89,105.89,0,0,0,19.39,8.09C2.79,32.65-1.71,56.6.54,80.21h0A105.73,105.73,0,0,0,32.71,96.36,77.7,77.7,0,0,0,39.6,85.25a68.42,68.42,0,0,1-10.85-5.18c.91-.66,1.8-1.34,2.66-2a75.57,75.57,0,0,0,64.32,0c.87.71,1.76,1.39,2.66,2a68.68,68.68,0,0,1-10.87,5.19,77,77,0,0,0,6.89,11.1A105.25,105.25,0,0,0,126.6,80.22h0C129.24,52.84,122.09,29.11,107.7,8.07ZM42.45,65.69C36.18,65.69,31,60,31,53s5-12.74,11.43-12.74S54,46,53.89,53,48.84,65.69,42.45,65.69Zm42.24,0C78.41,65.69,73.25,60,73.25,53s5-12.74,11.44-12.74S96.23,46,96.12,53,91.08,65.69,84.69,65.69Z"/><rect x="22" y="28" width="83" height="48" rx="20" fill="none" stroke="#fff" stroke-width="0"/></svg>
<div class="circ" style="left:2315px;background:rgba(90,150,200,.22)"></div>
<span class="ph lbl" style="left:2002.6px;top:785.5px">Scan QR</span><span class="ph lbl" style="left:2002.6px;top:803.5px">code</span>
<span class="ph lbl" style="left:2097.5px;top:785.5px">Enter</span><span class="ph lbl" style="left:2097.5px;top:803.5px">app ID</span>
<span class="ph lbl" style="left:2206.5px;top:785.5px">Discord</span>
<span class="ph lbl" style="left:2301.7px;top:785.5px">Docs</span>
<span class="ph" style="left:2413px;top:785.5px;font-size:13px;color:#fff;width:5px;overflow:hidden">Videos</span>
<div style="left:1975px;top:863.5px;width:443px;height:633px;background:#111214;border-radius:42px 42px 44px 44px"></div>
<div style="left:1993px;top:891px;width:406px;height:117px;background:#1f212c;border-radius:18px"></div>
<span class="ph" style="left:1993px;width:406px;text-align:center;top:913.8px;font-size:16px;color:#ececec;letter-spacing:.2px;-webkit-text-stroke:.25px #ececec">Preview your Ensemble apps by scanning</span>
<span class="ph" style="left:1993px;width:406px;text-align:center;top:935px;font-size:16px;color:#ececec;letter-spacing:.2px;-webkit-text-stroke:.25px #ececec">the app's the QR code.</span>
<span class="ph" style="left:1993px;width:406px;text-align:center;top:972.3px;font-size:16px;color:#2bc9c9;letter-spacing:.27px;-webkit-text-stroke:.25px #2bc9c9">Where to find the QR code</span>
<span class="ph" style="left:2006.5px;top:1059px;font-size:23px;color:#fff;letter-spacing:.35px">Demo apps</span>
<div style="left:1993px;top:1104.5px;width:406px;height:370px;border-radius:18px;background:linear-gradient(180deg,#1f212c 0,#1d1e2d 30px,#15152f 140px,#12112e 262px,#1f212c 262.5px);overflow:hidden"></div>
<div style="left:2094px;top:1118px;width:204px;height:249.5px;background:#eef3f7;border-radius:22px 22px 0 0"></div>
<span class="t" style="left:2094px;width:204px;text-align:center;top:1130px;font-size:7.7px;font-weight:700;color:#222">Ensemble Kitchen Sink</span>
<span class="t" style="left:2094px;width:204px;text-align:center;top:1142px;font-size:7px;color:#8a8f96">Try out Ensemble widgets and capabilities.</span>
<svg style="left:2140px;top:1164px" width="112" height="80" viewBox="0 0 112 80">
<path d="M8 58 L70 22 L104 38 L44 76Z" fill="#dfe6ee"/>
<path d="M5 52 L68 12 L104 28 L104 32 L42 72 L5 56Z" fill="#1c2a72"/>
<path d="M5 52 L68 12 L104 28 L42 68Z" fill="#22358a"/>
<path d="M12 36 L44 16 L72 30 L38 52Z" fill="#3f86e6"/>
<path d="M18 33 L44 18 L52 22 L26 38Z" fill="#5ea1f2"/>
<path d="M20 26 L29 21 L36 24.5 L27 30Z" fill="#f0644a"/>
<path d="M42 21 L51 16 L58 19.5 L49 25Z" fill="#f0644a"/>
<path d="M66 17 L74 13 L80 16 L72 20.5Z" fill="#fff"/>
<path d="M78 26 L86 22 L92 25 L84 29.5Z" fill="#fff"/>
<path d="M62 6 L66 2 L68 8 L64 10Z" fill="#3f86e6"/>
<circle cx="50" cy="50" r="4" fill="none" stroke="#e8a23c" stroke-width="1.4"/>
<path d="M60 44 L72 37" stroke="#3fd08a" stroke-width="1.6"/>
<path d="M86 64 L94 60 L100 63 L92 67.5Z" fill="#fff" stroke="#d5dde6" stroke-width=".6"/>
</svg>
<div style="left:2094px;top:1248px;width:204px;height:119.5px;background:#fff;border-radius:18px 18px 0 0"></div>
<span class="t" style="left:2094px;width:204px;text-align:center;top:1261.5px;font-size:6.3px;color:#5c80b8;font-weight:400">Layout your screens</span>
<div style="left:2108.2px;top:1273.2px;width:55px;height:39.2px;background:#eef3f7;border-radius:3px"></div>
<span class="t" style="left:2108.2px;width:55px;text-align:center;top:1285.0px;font-size:6.5px;color:#333">Content</span>
<span class="t" style="left:2108.2px;width:55px;text-align:center;top:1295.0px;font-size:6.5px;color:#333">Widgets</span>
<div style="left:2168.4px;top:1273.2px;width:55px;height:39.2px;background:#eef3f7;border-radius:3px"></div>
<span class="t" style="left:2168.4px;width:55px;text-align:center;top:1290.0px;font-size:6.5px;color:#333">Form Widgets</span>
<div style="left:2228.5px;top:1273.2px;width:55px;height:39.2px;background:#eef3f7;border-radius:3px"></div>
<span class="t" style="left:2228.5px;width:55px;text-align:center;top:1285.0px;font-size:6.5px;color:#333">Layout</span>
<span class="t" style="left:2228.5px;width:55px;text-align:center;top:1295.0px;font-size:6.5px;color:#333">Widgets</span>
<div style="left:2108.2px;top:1316.9px;width:55px;height:39.2px;background:#eef3f7;border-radius:3px"></div>
<span class="t" style="left:2108.2px;width:55px;text-align:center;top:1333.7px;font-size:6.5px;color:#333">App Menu</span>
<div style="left:2168.4px;top:1316.9px;width:55px;height:39.2px;background:#eef3f7;border-radius:3px"></div>
<span class="t" style="left:2168.4px;width:55px;text-align:center;top:1328.7px;font-size:6.5px;color:#333">Header &amp;</span>
<span class="t" style="left:2168.4px;width:55px;text-align:center;top:1338.7px;font-size:6.5px;color:#333">Footer</span>
<div style="left:2228.5px;top:1316.9px;width:55px;height:39.2px;background:#eef3f7;border-radius:3px"></div>
<span class="t" style="left:2228.5px;width:55px;text-align:center;top:1328.7px;font-size:6.5px;color:#333">Example</span>
<span class="t" style="left:2228.5px;width:55px;text-align:center;top:1338.7px;font-size:6.5px;color:#333">screens</span>
<span class="ph" style="left:2011px;top:1390px;font-size:20px;color:#f2f2f2;-webkit-text-stroke:.3px #f2f2f2">Ensemble kitchen sink</span>
<span class="ph" style="left:2011px;top:1421px;font-size:14px;color:#a2a2a6">Directory of all Ensemble widgets, actions, and</span>
<span class="ph" style="left:2011px;top:1440px;font-size:14px;color:#a2a2a6">capabilities</span>
<div style="left:2318px;top:468px;width:259px;height:315px;background:#000;border-radius:16px;border:2px solid #303333;box-shadow:0 0 10px rgba(60,60,60,.25)"></div>
<svg style="left:2355.2px;top:505px" width="36.8" height="36.8" viewBox="0 0 36 36"><defs><clipPath id="gc2355"><circle cx="18" cy="18" r="16.1"/></clipPath></defs><circle cx="18" cy="18" r="16.1" stroke="#fff" stroke-width="3.8" fill="none"/>
<g clip-path="url(#gc2355)" fill="#fff"><path d="M2 11 L8.2 8.2 L8.8 12.6 Q12 13.4 13.4 15 L15.2 16.6 Q14 13.5 14.7 12.2 Q15 10.3 17 10 Q19.5 10.2 20.6 8.6 L23.8 5 L22 -2 L0 -2Z"/>
<path d="M18.7 20.8 Q19.3 18.6 22.3 18.4 Q24.2 18.6 25.3 20 Q27 21.6 28.8 22.5 Q30 24 29.6 27 L36 27 L30 38 L23 32 Q23.6 29.6 22.6 27.8 Q20.6 25 19.3 23.4 Q18.4 22.2 18.7 20.8Z"/></g></svg>
<span class="t" style="left:2413px;top:510.5px;font-size:28px;color:#fff;letter-spacing:.5px">Automatic</span>
<svg style="left:2355.3px;top:603.2px" width="46" height="34" viewBox="0 0 46 34"><defs><linearGradient id="fsh" x1="0" x2="1" y1="0" y2="0"><stop offset="0" stop-color="#fff" stop-opacity=".10"/><stop offset=".45" stop-color="#fff" stop-opacity="0"/><stop offset=".75" stop-color="#000" stop-opacity=".10"/><stop offset="1" stop-color="#000" stop-opacity=".02"/></linearGradient></defs><path d="M0.00 3.19 L1.90 3.27 L3.80 3.30 L5.70 3.28 L7.60 3.21 L9.50 3.09 L11.40 2.92 L13.30 2.72 L15.20 2.48 L17.10 2.22 L19.00 1.95 L20.90 1.67 L22.80 1.39 L24.70 1.13 L26.60 0.89 L28.50 0.69 L30.40 0.52 L32.30 0.40 L34.20 0.32 L36.10 0.30 L38.00 0.33 L39.90 0.41 L41.80 0.54 L43.70 0.71 L45.60 0.92 L45.60 29.72 L43.70 29.51 L41.80 29.34 L39.90 29.21 L38.00 29.13 L36.10 29.10 L34.20 29.12 L32.30 29.20 L30.40 29.32 L28.50 29.49 L26.60 29.69 L24.70 29.93 L22.80 30.19 L20.90 30.47 L19.00 30.75 L17.10 31.02 L15.20 31.28 L13.30 31.52 L11.40 31.72 L9.50 31.89 L7.60 32.01 L5.70 32.08 L3.80 32.10 L1.90 32.07 L0.00 31.99Z" fill="#f1f1f3"/><path d="M0.00 3.19 L1.90 3.27 L3.80 3.30 L5.70 3.28 L7.60 3.21 L9.50 3.09 L11.40 2.92 L13.30 2.72 L15.20 2.48 L17.10 2.22 L19.00 1.95 L20.90 1.67 L22.80 1.39 L24.70 1.13 L26.60 0.89 L28.50 0.69 L30.40 0.52 L32.30 0.40 L34.20 0.32 L36.10 0.30 L38.00 0.33 L39.90 0.41 L41.80 0.54 L43.70 0.71 L45.60 0.92 L45.60 3.13 L43.70 2.92 L41.80 2.75 L39.90 2.62 L38.00 2.54 L36.10 2.52 L34.20 2.54 L32.30 2.61 L30.40 2.74 L28.50 2.90 L26.60 3.11 L24.70 3.35 L22.80 3.61 L20.90 3.88 L19.00 4.16 L17.10 4.44 L15.20 4.70 L13.30 4.93 L11.40 5.14 L9.50 5.30 L7.60 5.42 L5.70 5.49 L3.80 5.52 L1.90 5.48 L0.00 5.40Z" fill="#c8302f"/><path d="M0.00 7.62 L1.90 7.70 L3.80 7.73 L5.70 7.71 L7.60 7.64 L9.50 7.52 L11.40 7.35 L13.30 7.15 L15.20 6.91 L17.10 6.65 L19.00 6.38 L20.90 6.10 L22.80 5.82 L24.70 5.56 L26.60 5.33 L28.50 5.12 L30.40 4.95 L32.30 4.83 L34.20 4.75 L36.10 4.73 L38.00 4.76 L39.90 4.84 L41.80 4.97 L43.70 5.14 L45.60 5.35 L45.60 7.56 L43.70 7.35 L41.80 7.18 L39.90 7.05 L38.00 6.97 L36.10 6.95 L34.20 6.97 L32.30 7.04 L30.40 7.17 L28.50 7.33 L26.60 7.54 L24.70 7.78 L22.80 8.04 L20.90 8.31 L19.00 8.59 L17.10 8.87 L15.20 9.13 L13.30 9.36 L11.40 9.57 L9.50 9.73 L7.60 9.85 L5.70 9.93 L3.80 9.95 L1.90 9.91 L0.00 9.83Z" fill="#c8302f"/><path d="M0.00 12.05 L1.90 12.13 L3.80 12.16 L5.70 12.14 L7.60 12.07 L9.50 11.95 L11.40 11.78 L13.30 11.58 L15.20 11.34 L17.10 11.08 L19.00 10.81 L20.90 10.53 L22.80 10.25 L24.70 9.99 L26.60 9.76 L28.50 9.55 L30.40 9.38 L32.30 9.26 L34.20 9.18 L36.10 9.16 L38.00 9.19 L39.90 9.27 L41.80 9.40 L43.70 9.57 L45.60 9.78 L45.60 12.00 L43.70 11.79 L41.80 11.61 L39.90 11.49 L38.00 11.41 L36.10 11.38 L34.20 11.40 L32.30 11.47 L30.40 11.60 L28.50 11.77 L26.60 11.97 L24.70 12.21 L22.80 12.47 L20.90 12.74 L19.00 13.02 L17.10 13.30 L15.20 13.56 L13.30 13.79 L11.40 14.00 L9.50 14.16 L7.60 14.28 L5.70 14.36 L3.80 14.38 L1.90 14.35 L0.00 14.26Z" fill="#c8302f"/><path d="M0.00 16.48 L1.90 16.56 L3.80 16.59 L5.70 16.57 L7.60 16.50 L9.50 16.38 L11.40 16.21 L13.30 16.01 L15.20 15.77 L17.10 15.51 L19.00 15.24 L20.90 14.96 L22.80 14.69 L24.70 14.42 L26.60 14.19 L28.50 13.98 L30.40 13.81 L32.30 13.69 L34.20 13.62 L36.10 13.59 L38.00 13.62 L39.90 13.70 L41.80 13.83 L43.70 14.00 L45.60 14.21 L45.60 16.43 L43.70 16.22 L41.80 16.04 L39.90 15.92 L38.00 15.84 L36.10 15.81 L34.20 15.83 L32.30 15.91 L30.40 16.03 L28.50 16.20 L26.60 16.40 L24.70 16.64 L22.80 16.90 L20.90 17.18 L19.00 17.45 L17.10 17.73 L15.20 17.99 L13.30 18.22 L11.40 18.43 L9.50 18.59 L7.60 18.71 L5.70 18.79 L3.80 18.81 L1.90 18.78 L0.00 18.69Z" fill="#c8302f"/><path d="M0.00 20.91 L1.90 20.99 L3.80 21.02 L5.70 21.00 L7.60 20.93 L9.50 20.81 L11.40 20.64 L13.30 20.44 L15.20 20.20 L17.10 19.94 L19.00 19.67 L20.90 19.39 L22.80 19.12 L24.70 18.86 L26.60 18.62 L28.50 18.41 L30.40 18.24 L32.30 18.12 L34.20 18.05 L36.10 18.02 L38.00 18.05 L39.90 18.13 L41.80 18.26 L43.70 18.43 L45.60 18.64 L45.60 20.86 L43.70 20.65 L41.80 20.48 L39.90 20.35 L38.00 20.27 L36.10 20.24 L34.20 20.26 L32.30 20.34 L30.40 20.46 L28.50 20.63 L26.60 20.83 L24.70 21.07 L22.80 21.33 L20.90 21.61 L19.00 21.89 L17.10 22.16 L15.20 22.42 L13.30 22.66 L11.40 22.86 L9.50 23.03 L7.60 23.15 L5.70 23.22 L3.80 23.24 L1.90 23.21 L0.00 23.12Z" fill="#c8302f"/><path d="M0.00 25.34 L1.90 25.42 L3.80 25.45 L5.70 25.43 L7.60 25.36 L9.50 25.24 L11.40 25.08 L13.30 24.87 L15.20 24.63 L17.10 24.38 L19.00 24.10 L20.90 23.82 L22.80 23.55 L24.70 23.29 L26.60 23.05 L28.50 22.84 L30.40 22.67 L32.30 22.55 L34.20 22.48 L36.10 22.45 L38.00 22.48 L39.90 22.56 L41.80 22.69 L43.70 22.86 L45.60 23.07 L45.60 25.29 L43.70 25.08 L41.80 24.91 L39.90 24.78 L38.00 24.70 L36.10 24.67 L34.20 24.69 L32.30 24.77 L30.40 24.89 L28.50 25.06 L26.60 25.26 L24.70 25.50 L22.80 25.76 L20.90 26.04 L19.00 26.32 L17.10 26.59 L15.20 26.85 L13.30 27.09 L11.40 27.29 L9.50 27.46 L7.60 27.58 L5.70 27.65 L3.80 27.67 L1.90 27.64 L0.00 27.56Z" fill="#c8302f"/><path d="M0.00 29.77 L1.90 29.85 L3.80 29.88 L5.70 29.86 L7.60 29.79 L9.50 29.67 L11.40 29.51 L13.30 29.30 L15.20 29.07 L17.10 28.81 L19.00 28.53 L20.90 28.25 L22.80 27.98 L24.70 27.72 L26.60 27.48 L28.50 27.27 L30.40 27.11 L32.30 26.98 L34.20 26.91 L36.10 26.88 L38.00 26.91 L39.90 26.99 L41.80 27.12 L43.70 27.29 L45.60 27.50 L45.60 29.72 L43.70 29.51 L41.80 29.34 L39.90 29.21 L38.00 29.13 L36.10 29.10 L34.20 29.12 L32.30 29.20 L30.40 29.32 L28.50 29.49 L26.60 29.69 L24.70 29.93 L22.80 30.19 L20.90 30.47 L19.00 30.75 L17.10 31.02 L15.20 31.28 L13.30 31.52 L11.40 31.72 L9.50 31.89 L7.60 32.01 L5.70 32.08 L3.80 32.10 L1.90 32.07 L0.00 31.99Z" fill="#c8302f"/><path d="M0.00 3.19 L1.96 3.27 L3.92 3.30 L5.88 3.27 L7.84 3.19 L9.80 3.06 L11.76 2.89 L13.72 2.67 L15.68 2.42 L17.64 2.14 L19.60 1.86 L19.60 17.37 L17.64 17.65 L15.68 17.92 L13.72 18.18 L11.76 18.39 L9.80 18.57 L7.84 18.70 L5.88 18.78 L3.92 18.81 L1.96 18.78 L0.00 18.69Z" fill="#2d5bab"/><circle cx="1.9" cy="4.8" r=".65" fill="#dfe6f3"/><circle cx="5.1" cy="4.8" r=".65" fill="#dfe6f3"/><circle cx="8.3" cy="4.7" r=".65" fill="#dfe6f3"/><circle cx="11.5" cy="4.4" r=".65" fill="#dfe6f3"/><circle cx="14.7" cy="4.0" r=".65" fill="#dfe6f3"/><circle cx="17.9" cy="3.6" r=".65" fill="#dfe6f3"/><circle cx="1.9" cy="7.8" r=".65" fill="#dfe6f3"/><circle cx="5.1" cy="7.8" r=".65" fill="#dfe6f3"/><circle cx="8.3" cy="7.7" r=".65" fill="#dfe6f3"/><circle cx="11.5" cy="7.4" r=".65" fill="#dfe6f3"/><circle cx="14.7" cy="7.0" r=".65" fill="#dfe6f3"/><circle cx="17.9" cy="6.6" r=".65" fill="#dfe6f3"/><circle cx="1.9" cy="10.8" r=".65" fill="#dfe6f3"/><circle cx="5.1" cy="10.8" r=".65" fill="#dfe6f3"/><circle cx="8.3" cy="10.7" r=".65" fill="#dfe6f3"/><circle cx="11.5" cy="10.4" r=".65" fill="#dfe6f3"/><circle cx="14.7" cy="10.0" r=".65" fill="#dfe6f3"/><circle cx="17.9" cy="9.6" r=".65" fill="#dfe6f3"/><circle cx="1.9" cy="13.8" r=".65" fill="#dfe6f3"/><circle cx="5.1" cy="13.8" r=".65" fill="#dfe6f3"/><circle cx="8.3" cy="13.7" r=".65" fill="#dfe6f3"/><circle cx="11.5" cy="13.4" r=".65" fill="#dfe6f3"/><circle cx="14.7" cy="13.0" r=".65" fill="#dfe6f3"/><circle cx="17.9" cy="12.6" r=".65" fill="#dfe6f3"/><circle cx="1.9" cy="16.8" r=".65" fill="#dfe6f3"/><circle cx="5.1" cy="16.8" r=".65" fill="#dfe6f3"/><circle cx="8.3" cy="16.7" r=".65" fill="#dfe6f3"/><circle cx="11.5" cy="16.4" r=".65" fill="#dfe6f3"/><circle cx="14.7" cy="16.0" r=".65" fill="#dfe6f3"/><circle cx="17.9" cy="15.6" r=".65" fill="#dfe6f3"/><path d="M0.00 3.19 L1.90 3.27 L3.80 3.30 L5.70 3.28 L7.60 3.21 L9.50 3.09 L11.40 2.92 L13.30 2.72 L15.20 2.48 L17.10 2.22 L19.00 1.95 L20.90 1.67 L22.80 1.39 L24.70 1.13 L26.60 0.89 L28.50 0.69 L30.40 0.52 L32.30 0.40 L34.20 0.32 L36.10 0.30 L38.00 0.33 L39.90 0.41 L41.80 0.54 L43.70 0.71 L45.60 0.92 L45.60 29.72 L43.70 29.51 L41.80 29.34 L39.90 29.21 L38.00 29.13 L36.10 29.10 L34.20 29.12 L32.30 29.20 L30.40 29.32 L28.50 29.49 L26.60 29.69 L24.70 29.93 L22.80 30.19 L20.90 30.47 L19.00 30.75 L17.10 31.02 L15.20 31.28 L13.30 31.52 L11.40 31.72 L9.50 31.89 L7.60 32.01 L5.70 32.08 L3.80 32.10 L1.90 32.07 L0.00 31.99Z" fill="url(#fsh)"/></svg>
<span class="t" style="left:2421px;top:606.5px;font-size:28px;color:#fff">English</span>
<div style="left:2328px;top:671px;width:239px;height:102px;background:#313333;border-radius:9px"></div>
<svg style="left:2355.3px;top:705.4px" width="46" height="34" viewBox="0 0 46 34"><path d="M0.00 3.19 L1.90 3.27 L3.80 3.30 L5.70 3.28 L7.60 3.21 L9.50 3.09 L11.40 2.92 L13.30 2.72 L15.20 2.48 L17.10 2.22 L19.00 1.95 L20.90 1.67 L22.80 1.39 L24.70 1.13 L26.60 0.89 L28.50 0.69 L30.40 0.52 L32.30 0.40 L34.20 0.32 L36.10 0.30 L38.00 0.33 L39.90 0.41 L41.80 0.54 L43.70 0.71 L45.60 0.92 L45.60 29.72 L43.70 29.51 L41.80 29.34 L39.90 29.21 L38.00 29.13 L36.10 29.10 L34.20 29.12 L32.30 29.20 L30.40 29.32 L28.50 29.49 L26.60 29.69 L24.70 29.93 L22.80 30.19 L20.90 30.47 L19.00 30.75 L17.10 31.02 L15.20 31.28 L13.30 31.52 L11.40 31.72 L9.50 31.89 L7.60 32.01 L5.70 32.08 L3.80 32.10 L1.90 32.07 L0.00 31.99Z" fill="#a41f22"/><path d="M0.00 9.95 L1.90 10.04 L3.80 10.07 L5.70 10.05 L7.60 9.98 L9.50 9.85 L11.40 9.69 L13.30 9.49 L15.20 9.25 L17.10 8.99 L19.00 8.72 L20.90 8.44 L22.80 8.16 L24.70 7.90 L26.60 7.66 L28.50 7.46 L30.40 7.29 L32.30 7.17 L34.20 7.09 L36.10 7.07 L38.00 7.10 L39.90 7.18 L41.80 7.30 L43.70 7.48 L45.60 7.69 L45.60 22.95 L43.70 22.74 L41.80 22.57 L39.90 22.44 L38.00 22.36 L36.10 22.33 L34.20 22.36 L32.30 22.43 L30.40 22.55 L28.50 22.72 L26.60 22.93 L24.70 23.16 L22.80 23.42 L20.90 23.70 L19.00 23.98 L17.10 24.25 L15.20 24.51 L13.30 24.75 L11.40 24.95 L9.50 25.12 L7.60 25.24 L5.70 25.31 L3.80 25.33 L1.90 25.30 L0.00 25.22Z" fill="#f3c226"/><path d="M32.00 7.18 L33.94 7.10 L35.89 7.07 L37.83 7.09 L39.77 7.17 L41.71 7.30 L43.66 7.47 L45.60 7.69 L45.60 22.95 L43.66 22.74 L41.71 22.56 L39.77 22.43 L37.83 22.36 L35.89 22.33 L33.94 22.36 L32.00 22.45Z" fill="#d6a912"/><rect x="6" y="12.8" width="2" height="9" fill="#b9823a"/><rect x="14" y="12.8" width="2" height="9" fill="#b9823a"/><path d="M8.6 13.8 h4.8 v5 q0 3 -2.4 3.6 q-2.4 -.6 -2.4 -3.6Z" fill="#a3302c"/><rect x="11" y="14.2" width="2" height="3.4" fill="#9fb3c8"/><path d="M8.8 13.4 q2.2 -2.6 4.4 0Z" fill="#a3302c"/><path d="M0.00 3.19 L1.90 3.27 L3.80 3.30 L5.70 3.28 L7.60 3.21 L9.50 3.09 L11.40 2.92 L13.30 2.72 L15.20 2.48 L17.10 2.22 L19.00 1.95 L20.90 1.67 L22.80 1.39 L24.70 1.13 L26.60 0.89 L28.50 0.69 L30.40 0.52 L32.30 0.40 L34.20 0.32 L36.10 0.30 L38.00 0.33 L39.90 0.41 L41.80 0.54 L43.70 0.71 L45.60 0.92 L45.60 29.72 L43.70 29.51 L41.80 29.34 L39.90 29.21 L38.00 29.13 L36.10 29.10 L34.20 29.12 L32.30 29.20 L30.40 29.32 L28.50 29.49 L26.60 29.69 L24.70 29.93 L22.80 30.19 L20.90 30.47 L19.00 30.75 L17.10 31.02 L15.20 31.28 L13.30 31.52 L11.40 31.72 L9.50 31.89 L7.60 32.01 L5.70 32.08 L3.80 32.10 L1.90 32.07 L0.00 31.99Z" fill="url(#fsh)"/></svg>
<span class="t" style="left:2421px;top:708.5px;font-size:28px;color:#fff">Spanish</span>
<svg style="left:1833px;top:1593px" width="38" height="38" viewBox="0 0 38 38"><g fill="#fff"><rect x=".5" y="3.8" width="21" height="5"/><rect x="24.4" y=".2" width="5.2" height="12.5"/><rect x="29.6" y="3.8" width="7.9" height="5"/><rect x=".5" y="16.1" width="8.1" height="5"/><rect x="8.6" y="12.2" width="4.9" height="12.5"/><rect x="16.8" y="16.1" width="20.7" height="5"/><rect x=".5" y="28.1" width="13" height="5"/><rect x="16.5" y="24.2" width="5.1" height="12.8"/><rect x="21.6" y="28.1" width="15.9" height="5"/></g></svg>
<span class="t" style="left:1900px;top:1596px;font-size:32px;color:#fff;letter-spacing:.92px;-webkit-text-stroke:.3px #fff">Device Preview</span>
<div style="left:2436px;top:1580px;width:105px;height:64px;border-radius:32px;background:#fff"></div>
<div style="left:2484px;top:1588px;width:48px;height:48px;border-radius:50%;background:#000"></div>

</div></div>
</body>
</html>
